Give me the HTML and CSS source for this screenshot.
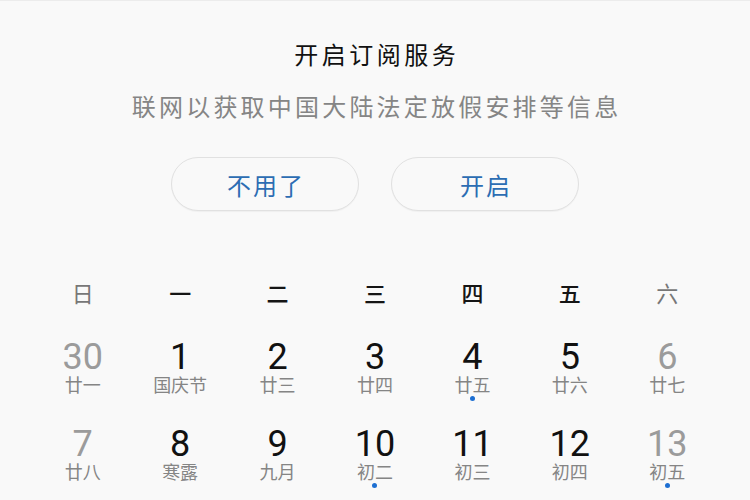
FILE: index.html
```html
<!DOCTYPE html>
<html lang="zh-CN">
<head>
<meta charset="utf-8">
<link rel="stylesheet" href="styles.css">
</head>
<body>
<div class="page">
  <div class="dialog">
    <div class="title">开启订阅服务</div>
    <div class="subtitle">联网以获取中国大陆法定放假安排等信息</div>
    <div class="actions">
      <div class="btn">不用了</div>
      <div class="btn">开启</div>
    </div>
  </div>
  <div class="calendar">
    <div class="weekdays">
      <div class="wd muted">日</div>
      <div class="wd">一</div>
      <div class="wd">二</div>
      <div class="wd">三</div>
      <div class="wd">四</div>
      <div class="wd">五</div>
      <div class="wd muted">六</div>
    </div>
    <div class="days">
      <div class="day muted"><div class="num">30</div><div class="lunar">廿一</div></div>
      <div class="day"><div class="num">1</div><div class="lunar">国庆节</div></div>
      <div class="day"><div class="num">2</div><div class="lunar">廿三</div></div>
      <div class="day"><div class="num">3</div><div class="lunar">廿四</div></div>
      <div class="day"><div class="num">4</div><div class="lunar">廿五</div><div class="dot"></div></div>
      <div class="day"><div class="num">5</div><div class="lunar">廿六</div></div>
      <div class="day muted"><div class="num">6</div><div class="lunar">廿七</div></div>
      <div class="day muted"><div class="num">7</div><div class="lunar">廿八</div></div>
      <div class="day"><div class="num">8</div><div class="lunar">寒露</div></div>
      <div class="day"><div class="num">9</div><div class="lunar">九月</div></div>
      <div class="day"><div class="num">10</div><div class="lunar">初二</div><div class="dot"></div></div>
      <div class="day"><div class="num">11</div><div class="lunar">初三</div></div>
      <div class="day"><div class="num">12</div><div class="lunar">初四</div></div>
      <div class="day muted"><div class="num">13</div><div class="lunar">初五</div><div class="dot"></div></div>
    </div>
  </div>
</div>
</body>
</html>
```

FILE: styles.css
```css
html, body {
  margin: 0;
  padding: 0;
  background: #f9f9f9;
}
body {
  font-family: "Noto Sans CJK SC", "Noto Sans", sans-serif;
  width: 750px;
  height: 500px;
  overflow: hidden;
}
.page {
  width: 750px;
  height: 500px;
  border-top: 1px solid #ececec;
  box-sizing: border-box;
  overflow: hidden;
}
.dialog {
  display: flex;
  flex-direction: column;
  align-items: center;
}
.title {
  margin-top: 41px;
  font-size: 24px;
  line-height: 24px;
  letter-spacing: 3.5px;
  padding-left: 3.5px;
  color: #111111;
}
.subtitle {
  margin-top: 28px;
  font-size: 24px;
  line-height: 24px;
  letter-spacing: 3.2px;
  padding-left: 3.2px;
  color: #858585;
}
.actions {
  margin-top: 39px;
  display: flex;
  gap: 32px;
}
.btn {
  width: 188px;
  height: 54px;
  box-sizing: border-box;
  border: 1px solid #e1e1e1;
  border-radius: 27px;
  background: #f9f9f9;
  box-shadow: 0 1px 1px rgba(0, 0, 0, 0.04);
  display: flex;
  align-items: center;
  justify-content: center;
  font-size: 24px;
  letter-spacing: 2px;
  padding-left: 2px;
  color: #2c6db3;
}
.calendar {
  padding: 0 34px;
}
.weekdays {
  margin-top: 70px;
  display: grid;
  grid-template-columns: repeat(7, 1fr);
}
.wd {
  text-align: center;
  font-size: 22px;
  line-height: 22px;
  font-weight: 500;
  color: #151515;
}
.wd.muted {
  font-weight: 400;
  color: #777777;
}
.days {
  margin-top: 39px;
  display: grid;
  grid-template-columns: repeat(7, 1fr);
  grid-auto-rows: 87px;
}
.day {
  display: flex;
  flex-direction: column;
  align-items: center;
}
.num {
  font-family: Roboto, "Noto Sans", sans-serif;
  font-size: 36px;
  line-height: 30px;
  color: #111111;
}
.lunar {
  margin-top: 3px;
  font-size: 18px;
  line-height: 18px;
  color: #858585;
}
.day.muted .num {
  color: #9b9b9b;
}
.dot {
  margin-top: 3px;
  width: 5px;
  height: 5px;
  border-radius: 50%;
  background: #1d6fd2;
}
```
